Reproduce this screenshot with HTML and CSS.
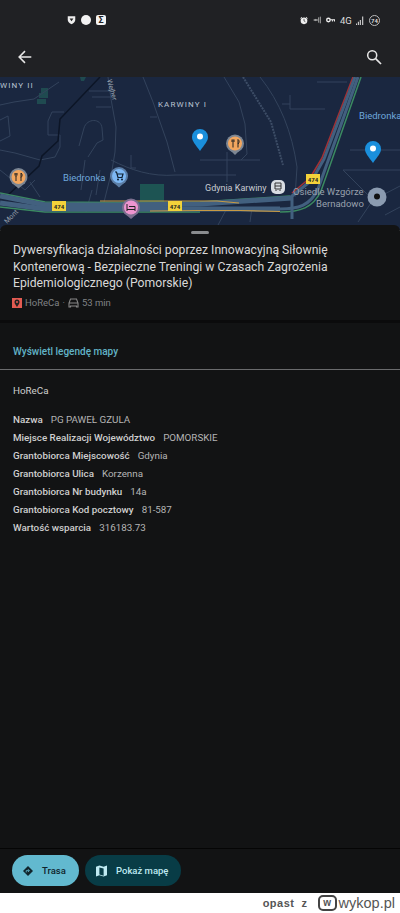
FILE: index.html
```html
<!DOCTYPE html>
<html lang="pl">
<head>
  <meta charset="UTF-8">
  <meta name="viewport" content="width=device-width, initial-scale=1.0">
  <title>HoReCa</title>
  <link rel="stylesheet" href="styles.css">
</head>
<body>
  <div class="phone">
    <div class="status-bar">
      <div class="status-left">
        <svg width="9" height="10" viewBox="0 0 12 12"><path d="M1 1h10v5c0 2.500-2.500 4.500-5 5.500C3.500 10.500 1 8.500 1 6z" fill="#eee"/><path d="M3.500 4h5L6 7.500z" fill="#222"/></svg>
        <span class="dot"></span>
        <span class="sigma">Σ</span>
      </div>
      <div class="status-right">
        <svg width="8" height="9" viewBox="0 0 12 12"><circle cx="6" cy="6.500" r="5" fill="#eee"/><path d="M6 3.500v3.200l2 1" stroke="#222" fill="none"/><path d="M0.500 3L3 0.800M11.500 3L9 0.800" stroke="#eee" stroke-width="1.200"/></svg>
        <svg width="8" height="8" viewBox="0 0 12 10"><path d="M0 5l4-2v1h3v2H4v1z" fill="#aaa"/><path d="M8.500 1v8M11 0v10" stroke="#bbb" stroke-width="1.300"/></svg>
        <svg width="9" height="6" viewBox="0 0 13 8"><circle cx="3.500" cy="4" r="2.500" fill="none" stroke="#eee" stroke-width="2"/><path d="M6 3h7v3h-1.500V4.500H10V6H8.500V4.500H6z" fill="#eee"/></svg>
        <span class="net">4G</span>
        <svg width="8" height="9" viewBox="0 0 9 10"><path d="M0.500 10V8.500M2.700 10V6.500M4.900 10V4.500M7.500 10V0.500" stroke="#ccc" stroke-width="1.300"/></svg>
        <span class="battery">74</span>
      </div>
    </div>

    <div class="app-bar">
      <svg width="18" height="18" viewBox="0 0 20 20"><path d="M17 10H4M10 3.500L3.500 10l6.500 6.500" fill="none" stroke="#e6e6e6" stroke-width="1.700"/></svg>
      <svg width="18" height="18" viewBox="0 0 20 20"><circle cx="8" cy="8" r="5" fill="none" stroke="#e6e6e6" stroke-width="1.700"/><path d="M11.800 11.800l6 6" stroke="#e6e6e6" stroke-width="1.900"/></svg>
    </div>

    <svg class="map" width="400" height="153" viewBox="0 77 400 153">
      <rect x="0" y="77" width="400" height="153" fill="#1a2740"/>
      <!-- parks -->
      <path d="M41 88h7v5h-7zM39 93h9v5h-9zM37 99h9v5h-9zM80 77h6l-2 4h-3z" fill="#1f4a50"/>
      <path d="M140 184h24v18h-24z" fill="#1d5453"/>
      <!-- minor streets -->
      <g fill="none" stroke="#33435c" stroke-width="1">
        <path d="M0 105l14-3 20-3 25-17"/>
        <path d="M0 150l15 3 25 7 15-3 5-10v-12h-12v-14l4-9h12"/>
        <path d="M108 77l3 22 5 28-1 25-3 18-8 32"/>
        <path d="M111 160c20 10 40 17 65 15h60"/>
        <path d="M143 77l10 25 14 40 8 30"/>
        <path d="M150 117h7M131 155v13h5"/>
        <path d="M79 146l5-18c3-10 17-10 18 0l1 12-6 3-9 14M89 91h21M92 97h19M96 107h15"/>
        <path d="M0 120l8-4 2 20-10 5M0 170l25 20M25 190l10-10"/>
        <path d="M224 77l15 25 6 22 2 30-6 6M227 152v30M200 160h60"/>
        <path d="M260 77c20 25 32 55 37 90l-2 30"/>
        <path d="M290 95v14h35M290 104h-8M317 82h30"/>
        <path d="M343 170h57M343 170l30 30-15 22M373 200l27-14M350 150h50"/>
        <path d="M92 190l-6 22M100 170l-4 25M85 160l-4 30M40 197l-10-15"/>
        <path d="M250 222l2-15M218 225l8-15M385 215l15-8"/>
      </g>
      <path d="M100 77l-40 42-2 22-16 15-3 10-32 30" fill="none" stroke="#0c1526" stroke-width="1.500"/>
      <path d="M243 77l28 45 12 43" fill="none" stroke="#3d4d66" stroke-width="2" stroke-dasharray="2 1"/>
      <!-- highway -->
      <g fill="none" stroke-linejoin="round">
        <path d="M0 193l45 9 75 0.500 80-0.500 90-6" stroke="#3b8a61" stroke-width="1.500"/>
        <path d="M0 207l45 5h155" stroke="#3b8a61" stroke-width="1.500"/>
        <path d="M0 196l45 9h75l80-1 92-6" stroke="#42607f" stroke-width="5"/>
        <path d="M0 203l45 6h235" stroke="#42607f" stroke-width="5"/>
        <path d="M100 201h117l22 2" stroke="#c79a45" stroke-width="1.200"/>
        <path d="M150 211l50-0.500h40l40 1" stroke="#c79a45" stroke-width="1.200"/>
        <path d="M292 193l18-15 12-20 31-81" stroke="#a23034" stroke-width="1.600"/>
        <path d="M292 196l20-16 12-21 31-82" stroke="#42607f" stroke-width="3"/>
        <path d="M280 209c18 0 30-3 38-20l40-112" stroke="#42607f" stroke-width="3"/>
        <path d="M280 212c20 0 33-4 41-21l40-114" stroke="#3b8a61" stroke-width="1.500"/>
        <path d="M292 195v24" stroke="#42607f" stroke-width="3"/>
      </g>
      <!-- road labels -->
      <g class="road-label">
        <rect x="52" y="201" width="14" height="10" fill="#f3d23a"/><text x="59" y="208.500">474</text>
        <rect x="168" y="201" width="14" height="10" fill="#f3d23a"/><text x="175" y="208.500">474</text>
        <rect x="306" y="174" width="14" height="10" fill="#f3d23a"/><text x="313" y="181.500">474</text>
      </g>
      <text class="map-area" x="158" y="107">KARWINY I</text>
      <text class="map-area" x="0" y="88">WINY II</text>
      <text class="map-blue" x="63" y="181">Biedronka</text>
      <text class="map-blue" x="359" y="119">Biedronka</text>
      <text class="map-grey" x="205" y="191">Gdynia Karwiny</text>
      <text class="map-dim" x="293" y="195">Osiedle Wzgórze</text>
      <text class="map-dim" x="316" y="207">Bernadowo</text>
      <text class="map-dim street" transform="translate(7 224) rotate(-45)">Mont</text>
      <text class="map-dim street" transform="translate(107 80) rotate(75)">Wejher</text>

      <!-- restaurant / shop / hotel markers -->
      <g>
        <path d="M12 183l6.500 5.500 6.500-5.500z" fill="#7d8794"/><circle cx="18.500" cy="177" r="9" fill="#7d8794"/><circle cx="18.500" cy="177" r="7" fill="#f2a65e"/>
        <path d="M16 173v3.500M15 173v2.500M17 173v2.500M16 176v5M21 173v8M21 173c1.500 1 1.500 3 0 4.500" stroke="#222" fill="none"/>
      </g>
      <g>
        <path d="M113 182l6 5.500 6-5.500z" fill="#5c7ea6"/><circle cx="119" cy="176" r="9" fill="#5c7ea6"/><circle cx="119" cy="176" r="7" fill="#7db8f5"/>
        <path d="M115 172h1.500l1.500 5.500h4l1-3.500h-6" stroke="#123" fill="none" stroke-width="1.200"/><circle cx="118" cy="179.500" r="1" fill="#123"/><circle cx="122" cy="179.500" r="1" fill="#123"/>
      </g>
      <g>
        <path d="M124 213l7 6 7-6z" fill="#7d6f90"/><circle cx="131" cy="207.500" r="9" fill="#7d6f90"/><circle cx="131" cy="207.500" r="7" fill="#ee94cf"/>
        <path d="M127 204v7M127 209.500h8v1.500M129 206.500h6v3" stroke="#222" fill="none"/>
      </g>
      <g>
        <path d="M229 149l6 6 6-6z" fill="#7d8794"/><circle cx="235" cy="143.500" r="9" fill="#7d8794"/><circle cx="235" cy="143.500" r="7" fill="#f2a65e"/>
        <path d="M233 139.500v3.500M232 139.500v2.500M234 139.500v2.500M233 143v4.500M238 139.500v8M238 139.500c1.500 1 1.500 3 0 4.500" stroke="#222" fill="none"/>
      </g>
      <rect x="271" y="180" width="14" height="14" rx="5" fill="#d8dce2"/>
      <path d="M275 183h6v6h-6zM275 186h6M276 190v1M280 190v1" stroke="#333" fill="none"/>
      <!-- blue pins -->
      <path d="M200 151c-5-7-8-10-8-14a8 8 0 0 1 16 0c0 4-3 7-8 14z" fill="#1a8fdc"/><circle cx="200" cy="136.500" r="3" fill="#fff"/>
      <path d="M373 163c-5-7-8-10-8-14a8 8 0 0 1 16 0c0 4-3 7-8 14z" fill="#1a8fdc"/><circle cx="373" cy="148.500" r="3" fill="#fff"/>
      <!-- grey location marker -->
      <circle cx="377" cy="197" r="9.500" fill="#8b9bb0"/><circle cx="377" cy="196.500" r="3" fill="#111"/>
    </svg>

    <div class="sheet">
      <section class="summary">
        <div class="handle"></div>
        <h1>Dywersyfikacja działalności poprzez Innowacyjną Siłownię Kontenerową - Bezpieczne Treningi w Czasach Zagrożenia Epidemiologicznego (Pomorskie)</h1>
        <div class="meta">
          <svg width="10" height="10" viewBox="0 0 10 10"><rect width="10" height="10" fill="#e35b52"/><path d="M5 9C3.200 6.500 2.500 5.300 2.500 4a2.500 2.500 0 0 1 5 0C7.500 5.300 6.800 6.500 5 9z" fill="#222"/><circle cx="5" cy="4" r="1" fill="#e35b52"/></svg>
          <span>HoReCa</span>
          <span>·</span>
          <svg width="11" height="10" viewBox="0 0 11 10"><path d="M2.500 1h6l1.500 4v4H8.500V8h-6v1H1V5zM1 5h9" fill="none" stroke="#888" stroke-width="1.100"/></svg>
          <span>53 min</span>
        </div>
      </section>

      <section class="legend">
        <a href="#" class="legend-link">Wyświetl legendę mapy</a>
      </section>

      <section class="details">
        <p class="layer">HoReCa</p>
        <div class="row"><b>Nazwa</b><span>PG PAWEŁ GZULA</span></div>
        <div class="row"><b>Miejsce Realizacji Województwo</b><span>POMORSKIE</span></div>
        <div class="row"><b>Grantobiorca Miejscowość</b><span>Gdynia</span></div>
        <div class="row"><b>Grantobiorca Ulica</b><span>Korzenna</span></div>
        <div class="row"><b>Grantobiorca Nr budynku</b><span>14a</span></div>
        <div class="row"><b>Grantobiorca Kod pocztowy</b><span>81-587</span></div>
        <div class="row"><b>Wartość wsparcia</b><span>316183.73</span></div>
      </section>

      <div class="actions">
        <a href="#" class="pill pill-primary">
          <svg width="10" height="10" viewBox="0 0 14 14"><path d="M7 0l7 7-7 7-7-7z" fill="#10252c"/><path d="M4.500 9V6.500h4M7 4.500l2 2-2 2" fill="none" stroke="#62b9cf" stroke-width="1.200"/></svg>
          Trasa
        </a>
        <a href="#" class="pill pill-secondary">
          <svg width="11" height="12" viewBox="0 0 13 14"><path d="M0 2l4-1.500 5 1.500 4-1.500V12l-4 1.500L4 12l-4 1.500z" fill="#bfeaf2"/><path d="M4 3v8l5 1.500V4z" fill="#083c46"/></svg>
          Pokaż mapę
        </a>
      </div>
    </div>

    <footer class="credit">
      <span class="author">opast&nbsp; z</span>
      <span class="badge">w</span>
      <span class="brand">wykop.pl</span>
    </footer>
  </div>
</body>
</html>
```

FILE: styles.css
```css
* {
  box-sizing: border-box;
}
body {
  margin: 0;
  background-color: #fff;
  font-family: Roboto, "Noto Sans", sans-serif;
  color: #ddd;
}
.phone {
  display: flex;
  flex-direction: column;
  width: 400px;
  height: 913px;
  overflow: hidden;
}
.status-bar {
  display: flex;
  justify-content: space-between;
  align-items: center;
  height: 45px;
  padding: 0 20px 5px 67px;
  background-color: #202124;
}
.status-left, .status-right {
  display: flex;
  align-items: center;
}
.status-left {
  gap: 5px;
}
.status-right {
  gap: 5px;
}
.dot {
  width: 10px;
  height: 10px;
  border-radius: 50%;
  background-color: #f2f2f2;
}
.sigma {
  width: 10px;
  height: 10px;
  border-radius: 2px;
  background-color: #f2f2f2;
  color: #202124;
  font-size: 9px;
  font-weight: 700;
  line-height: 10px;
  text-align: center;
}
.net {
  width: 11px;
  font-size: 9.5px;
  color: #ddd;
}
.battery {
  width: 11px;
  height: 11px;
  border: 1px solid #bbb;
  border-radius: 50%;
  font-size: 6px;
  font-weight: 700;
  line-height: 9px;
  text-align: center;
  color: #ddd;
}
.app-bar {
  display: flex;
  justify-content: space-between;
  align-items: center;
  height: 32px;
  padding: 0 17px 8px 16px;
  background-color: #202124;
}
.map {
  display: block;
  flex: none;
  margin-bottom: -5px;
}
.map text {
  font-family: Roboto, sans-serif;
}
.road-label text {
  font-size: 6px;
  font-weight: 700;
  text-anchor: middle;
  fill: #222;
}
.map-area {
  font-size: 8px;
  letter-spacing: 1.1px;
  fill: #b9c2d0;
}
.map-blue {
  font-size: 9.5px;
  fill: #6fa8dc;
}
.map-grey {
  font-size: 9px;
  fill: #c8ccd2;
}
.map-dim {
  font-size: 9.5px;
  fill: #99a1ad;
}
.map-dim.street {
  font-size: 7px;
}
.sheet {
  display: flex;
  flex: 1;
  flex-direction: column;
  border-radius: 6px 6px 0 0;
  background-color: #121314;
}
.handle {
  width: 18px;
  height: 3px;
  margin: 6px auto 8px;
  border-radius: 2px;
  background-color: #8a8c8f;
}
.summary {
  height: 98px;
  padding: 0 13px;
  border-bottom: 3px solid #0b0b0c;
}
h1 {
  margin: 0;
  font-size: 12.2px;
  font-weight: 400;
  line-height: 16.7px;
  color: #d8d8d8;
}
.meta {
  display: flex;
  align-items: center;
  gap: 3px;
  margin: 5px 0 0 -1px;
  font-size: 9.5px;
  color: #808285;
}
.legend {
  height: 47px;
  padding: 17px 13px 0;
  border-bottom: 1px solid #6a6b6d;
}
.legend-link {
  font-size: 10px;
  font-weight: 500;
  color: #62b3c7;
  text-decoration: none;
}
.details {
  flex: 1;
  padding: 15px 13px 0;
  font-size: 9.8px;
}
.layer {
  margin: 0 0 17px;
  line-height: 12px;
  color: #cfcfcf;
}
.row {
  display: flex;
  gap: 8px;
  height: 18px;
  color: #b5b5b5;
}
.row b {
  font-weight: 500;
  color: #cfcfcf;
}
.actions {
  display: flex;
  gap: 6px;
  height: 45px;
  padding: 6px 0 0 12px;
  border-top: 1px solid #050505;
}
.pill {
  display: flex;
  align-items: center;
  gap: 9px;
  height: 31px;
  padding-left: 11px;
  border-radius: 16px;
  font-size: 9.5px;
  font-weight: 500;
  white-space: nowrap;
  text-decoration: none;
}
.pill-primary {
  width: 67px;
  background-color: #62b9cf;
  color: #10252c;
}
.pill-secondary {
  width: 96px;
  background-color: #083c46;
  color: #bfeaf2;
}
.credit {
  display: flex;
  flex: none;
  justify-content: flex-end;
  align-items: center;
  height: 20px;
  padding-right: 5px;
  background-color: #fff;
  font-family: "Liberation Sans", sans-serif;
  color: #555;
}
.author {
  margin-right: 10px;
  font-size: 11px;
  font-weight: 700;
  letter-spacing: 0.5px;
}
.badge {
  width: 19px;
  height: 16px;
  margin-right: 2px;
  border: 2px solid #444;
  border-radius: 5px;
  font-size: 10px;
  font-weight: 700;
  line-height: 11px;
  text-align: center;
}
.brand {
  font-size: 14.5px;
  line-height: 16px;
}
```
